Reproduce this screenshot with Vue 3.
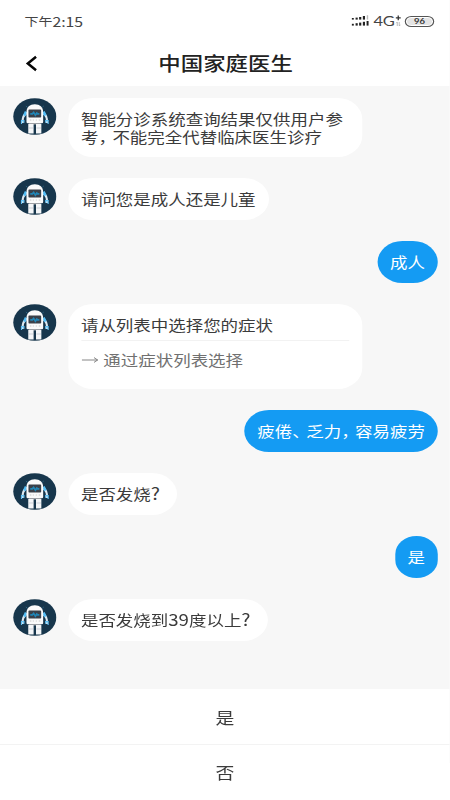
<script setup>
const messages = [
  { from: 'bot', wide: true, lines: ['智能分诊系统查询结果仅供用户参', '考，不能完全代替临床医生诊疗'] },
  { from: 'bot', lines: ['请问您是成人还是儿童'] },
  { from: 'me', lines: ['成人'] },
  { from: 'bot', wide: true, lines: ['请从列表中选择您的症状'], link: '通过症状列表选择' },
  { from: 'me', lines: ['疲倦、乏力，容易疲劳'] },
  { from: 'bot', lines: ['是否发烧?'] },
  { from: 'me', lines: ['是'] },
  { from: 'bot', lines: ['是否发烧到39度以上?'] },
]
const options = ['是', '否']
const parts = (line) => line.split(/([，、?]|\d+)/).filter(Boolean)
const kind = (s) => {
  if (s === '，' || s === '、') return 'mark'
  if (s === '?') return 'question'
  return /^\d+$/.test(s) ? 'number' : ''
}
</script>

<template>
  <div class="viewport">
    <div class="screen">
      <div class="status">
        <div class="time">下午<span class="digits">2:15</span></div>
        <div class="indicators">
          <svg class="signal" viewBox="0 0 18 12" preserveAspectRatio="none">
            <g fill="#222">
              <rect x="0" y="3" width="2.2" height="1.6" />
              <rect x="4" y="2.6" width="2.2" height="2" />
              <rect x="7.6" y="2" width="2.2" height="2.6" />
              <rect x="11.4" y="1" width="2.2" height="3.6" />
              <rect x="0" y="8.8" width="2.2" height="1.8" />
              <rect x="4" y="8.2" width="2.2" height="2.4" />
              <rect x="7.6" y="7.6" width="2.2" height="3" />
              <rect x="11.4" y="6.8" width="2.2" height="3.8" />
              <rect x="15.2" y="6" width="2" height="4.6" />
            </g>
            <rect x="15.4" y="0.2" width="1.4" height="4.4" fill="#bbb" />
          </svg>
          <span class="net">4G</span>
          <svg class="plus" viewBox="0 0 6 12" preserveAspectRatio="none">
            <path d="M3 0.5V5.3M.5 2.9H5.5" stroke="#333" stroke-width="1.3" />
            <path d="M2 7V11M.8 8.2L2 7M4 7V11M4 11L5.2 9.8" stroke="#aaa" stroke-width=".8" fill="none" />
          </svg>
          <span class="battery"><b>96</b></span>
        </div>
      </div>
      <header class="header">
        <svg class="back" viewBox="0 0 12 18" preserveAspectRatio="none">
          <path d="M10.8 1.8L2 9l8.8 7.2" fill="none" stroke="#050505" stroke-width="2.7" />
        </svg>
        <h1>中国家庭医生</h1>
      </header>

      <main class="chat">
        <div v-for="(m, i) in messages" :key="i" class="row" :class="m.from">
          <svg v-if="m.from === 'bot'" class="avatar" viewBox="0 0 44 37" preserveAspectRatio="none">
            <ellipse cx="22" cy="18.5" rx="21.7" ry="18.3" fill="#17364c" />
            <path d="M13 8l1.4 1.2M31 8l-1.4 1.2" stroke="#2d6685" stroke-width="1" />
            <path d="M13.5 15C10.5 17 9.4 21 9.8 25" fill="none" stroke="#dfeaf2" stroke-width="2.2" />
            <path d="M30.5 15C33.5 17 34.6 21 34.2 25" fill="none" stroke="#dfeaf2" stroke-width="2.2" />
            <path d="M13.2 13.6L11.4 17.6M30.8 13.6L32.6 17.6" stroke="#54bdf5" stroke-width="2.6" />
            <path d="M8.6 26V22.6h2.4v2.2M35.4 26V22.6h-2.4v2.2" fill="none" stroke="#62c2f5" stroke-width="1.2" />
            <path d="M13.6 24V14C13.6 9.2 17 6.3 22 6.3S30.4 9.2 30.4 14V24Q30.4 25.2 29 25.2H15Q13.6 25.2 13.6 24Z" fill="#fafafa" />
            <rect x="15.6" y="11.6" width="12.8" height="8" rx=".8" fill="#3a4049" />
            <path d="M17.4 15.8h2.2l1.2-1.4 1.8 2.8 1.4-2.2 1 .9h1.6" fill="none" stroke="#2085b5" stroke-width="1.7" />
            <path d="M17 22h1.5M20 22h1M23 22h1M26 22h1.5" stroke="#bbb" stroke-width=".8" />
            <rect x="16" y="25" width="12" height="1.5" fill="#9c9fa4" />
            <path d="M15.4 26h5.4v9.4h-5.4zM23.2 26h5.4v9.4h-5.4z" fill="#f4f6f8" />
            <path d="M15.8 30h4.6M23.6 30h4.6" stroke="#b4bbc2" stroke-width=".6" />
          </svg>
          <div class="bubble" :class="{ wide: m.wide, card: m.link }">
            <p v-for="line in m.lines" :key="line"><span v-for="(s, k) in parts(line)" :key="k" :class="kind(s)">{{ s }}</span></p>
            <div v-if="m.link" class="link">
              <svg class="arrow" viewBox="0 0 18 10" preserveAspectRatio="none">
                <path d="M.5 5H16.5M12.8 2.6L16.5 5l-3.7 2.4" fill="none" stroke="#777" stroke-width=".9" />
              </svg>
              <span>{{ m.link }}</span>
            </div>
          </div>
        </div>
      </main>

      <footer class="options">
        <div v-for="o in options" :key="o" class="option">{{ o }}</div>
      </footer>
    </div>
  </div>
</template>

<style>
body { margin: 0; background: #fff; }
</style>

<style scoped>
.viewport { width: 450px; height: 800px; overflow: hidden; }
.screen {
  width: 381.356px; height: 800px; display: flex; flex-direction: column;
  transform: scaleX(1.18); transform-origin: 0 0;
  font-family: "Noto Sans CJK SC", sans-serif; background: #fff; color: #3b3b3b;
}
.status {
  height: 42px; box-sizing: border-box; padding: 0 13.5px 0 20.8px;
  display: flex; align-items: center; justify-content: space-between; color: #444;
}
.time { font-size: 11.8px; line-height: 20px; display: flex; align-items: center; }
.digits { font-size: 13.4px; }
.indicators { display: flex; align-items: center; }
.signal { width: 15px; height: 12px; margin-right: 4px; }
.net { font-family: Lato, sans-serif; font-size: 14px; line-height: 16px; letter-spacing: -.3px; }
.plus { width: 5px; height: 12px; margin: 0 3px 0 1px; }
.battery {
  width: 24.5px; height: 11px; box-sizing: border-box; border: 1px solid #555; border-radius: 6px;
  background: #e4e4e4; box-shadow: inset 0 0 0 1px #fff;
  display: flex; align-items: center; justify-content: center;
}
.battery b { font: 700 8px/9px Lato, sans-serif; color: #333; }
.header { height: 44px; display: flex; align-items: center; padding: 0 22px 2px; box-sizing: border-box; }
.back { width: 9.5px; height: 17px; flex: none; }
h1 {
  flex: 1; margin: 0; padding-right: 8.5px; text-align: center;
  font-size: 19px; line-height: 28px; font-weight: 500; color: #222;
}
.chat {
  flex: 1; min-height: 0; background: #f7f7f7; box-sizing: border-box;
  padding: 12px 10.6px 0; display: flex; flex-direction: column; gap: 21px;
}
.row { display: flex; align-items: flex-start; }
.row.me { justify-content: flex-end; }
.avatar { width: 37px; height: 37px; flex: none; margin-right: 10px; }
.bubble {
  box-sizing: border-box; min-height: 42px; padding: 12px 11px; border-radius: 21px;
  background: #fff; font-size: 14.8px; line-height: 17.6px;
}
.wide { width: 249px; }
.me .bubble { background: #149bf3; color: #fff; padding-right: 10.6px; padding-left: 10.6px; }
.bubble p { margin: 0; white-space: nowrap; display: flex; }
.mark { width: .8em; font-feature-settings: "halt"; }
.question { width: 11px; font-size: 16.5px; }
.number { font-size: 15.8px; }
.card { height: 85px; }
.link {
  margin-top: 6.5px; border-top: 1px solid #f2f2f2; padding-top: 10px;
  display: flex; align-items: center; gap: 4px; color: #707070;
}
.arrow { width: 15px; height: 10px; }
.options { height: 111.5px; flex: none; }
.option {
  height: 56px; box-sizing: border-box; border-bottom: 1px solid #f3f3f3;
  display: flex; align-items: center; justify-content: center; font-size: 16px; padding-top: 2px;
}
.option:last-child { border-bottom: 0; padding: 0 0 2px; }
</style>
